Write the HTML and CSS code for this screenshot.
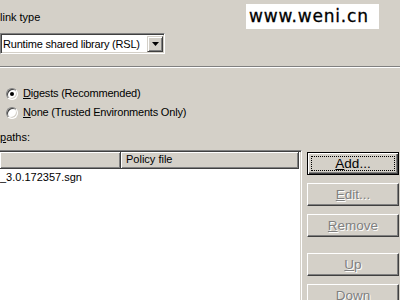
FILE: index.html
```html
<!DOCTYPE html>
<html lang="en">
<head>
  <meta charset="UTF-8">
  <title>Library path settings</title>
  <link rel="stylesheet" href="styles.css">
</head>
<body>
  <div class="dialog">
    <div class="field-label">link type</div>
    <div class="combo">
      <span class="combo-value">Runtime shared library (RSL)</span>
      <span class="combo-btn">
        <svg width="7" height="4" viewBox="0 0 7 4"><path d="M0 0h7L3.5 4z" fill="#000"/></svg>
      </span>
    </div>

    <div class="separator"></div>

    <div class="radio-group">
      <label class="radio checked"><span class="radio-dot"></span><span><u>D</u>igests (Recommended)</span></label>
      <label class="radio"><span class="radio-dot"></span><span><u>N</u>one (Trusted Environments Only)</span></label>
    </div>

    <div class="field-label paths-label"><u>p</u>aths:</div>

    <div class="paths-row">
      <div class="list">
        <div class="list-header">
          <div class="col col-path"></div>
          <div class="col col-policy">Policy file</div>
        </div>
        <div class="list-row">_3.0.172357.sgn</div>
      </div>
      <div class="buttons">
        <button class="btn default"><span class="focus"><u>A</u>dd...</span></button>
        <button class="btn" disabled><u>E</u>dit...</button>
        <button class="btn" disabled><u>R</u>emove</button>
        <button class="btn spaced" disabled><u>U</u>p</button>
        <button class="btn" disabled>Down</button>
      </div>
    </div>

    <div class="watermark">www.weni.cn</div>
  </div>
</body>
</html>
```

FILE: styles.css
```css
html, body {
  margin: 0;
  height: 100%;
  overflow: hidden;
}
body {
  background: #d4d0c8;
  font-family: 'Liberation Sans', Arial, sans-serif;
  font-size: 11px;
  color: #000;
}
.dialog {
  position: relative;
  height: 300px;
}
.field-label {
  line-height: 13px;
  padding-top: 11px;
}

/* combo box */
.combo {
  display: flex;
  align-items: center;
  width: 162px;
  height: 17px;
  margin-top: 9px;
  padding: 1px 1px 1px 0;
  background: #fff;
  border-top: 1px solid #808080;
  border-left: 1px solid #808080;
  border-bottom: 1px solid #fff;
  border-right: 1px solid #fff;
  box-shadow: inset 1px 1px #404040, inset -1px -1px #d4d0c8;
}
.combo-value {
  flex: 1;
  padding-left: 2px;
  white-space: nowrap;
  letter-spacing: -0.2px;
}
.combo-btn {
  width: 16px;
  height: 16px;
  display: flex;
  align-items: center;
  justify-content: center;
  box-sizing: border-box;
  background: #d4d0c8;
  border: 1px solid;
  border-color: #d4d0c8 #404040 #404040 #d4d0c8;
  box-shadow: inset 1px 1px #fff, inset -1px -1px #808080;
}

.separator {
  margin-top: 12px;
  border-top: 1px solid #808080;
  border-bottom: 1px solid #fff;
}

/* radios */
.radio-group {
  padding: 19px 0 0 6px;
  display: flex;
  flex-direction: column;
  gap: 6px;
}
.radio {
  display: flex;
  align-items: center;
  gap: 5px;
  line-height: 13px;
  letter-spacing: -0.2px;
}
.radio-dot {
  width: 12px;
  height: 12px;
  box-sizing: border-box;
  border-radius: 50%;
  background: #fff;
  border: 1px solid;
  border-color: #808080 #fff #fff #808080;
  box-shadow: inset 1px 1px #404040, inset -1px -1px #d4d0c8;
  display: flex;
  align-items: center;
  justify-content: center;
}
.radio.checked .radio-dot::after {
  content: '';
  width: 4px;
  height: 4px;
  border-radius: 50%;
  background: #000;
}
.paths-label {
  padding-top: 12px;
}

/* list + buttons */
.paths-row {
  display: flex;
  gap: 5px;
  margin-top: 6px;
}
.list {
  width: 302px;
  height: 160px;
  box-sizing: border-box;
  background: #fff;
  border-top: 1px solid #808080;
  border-right: 1px solid #fff;
  box-shadow: inset 0 1px #404040, inset -1px 0 #d4d0c8;
  padding-top: 1px;
  padding-right: 2px;
}
.list-header {
  display: flex;
  height: 17px;
}
.col {
  box-sizing: border-box;
  background: #d4d0c8;
  border-right: 1px solid #404040;
  border-bottom: 1px solid #404040;
  box-shadow: inset 1px 1px #fff, inset -1px -1px #808080;
  line-height: 15px;
  padding-left: 5px;
}
.col-path { width: 121px; }
.col-policy { flex: 1; }
.list-row {
  line-height: 13px;
  padding-top: 2px;
}
.buttons {
  display: flex;
  flex-direction: column;
  gap: 8px;
  padding-top: 2px;
}
.btn {
  width: 92px;
  height: 23px;
  padding: 0;
  font-family: inherit;
  font-size: 13.5px;
  color: #000;
  background: #d4d0c8;
  border: 1px solid;
  border-color: #fff #404040 #404040 #fff;
  box-shadow: inset -1px -1px #808080;
}
.btn:disabled {
  color: #808080;
  text-shadow: 1px 1px #fff;
}
.btn.default {
  border-color: #000;
  box-shadow: inset 1px 1px #fff, inset -1px -1px #404040, inset -2px -2px #808080;
  display: flex;
  padding: 3px;
}
.btn .focus {
  flex: 1;
  display: flex;
  align-items: center;
  justify-content: center;
  border: 1px dotted #000;
}
.btn.spaced { margin-top: 8px; }

.watermark {
  position: absolute;
  top: 4px;
  left: 246px;
  width: 133px;
  height: 25px;
  background: #fff;
  font-family: 'DejaVu Sans', sans-serif;
  font-size: 17px;
  letter-spacing: 0.8px;
  line-height: 25px;
  padding-left: 3px;
  box-sizing: border-box;
  -webkit-text-stroke: 0.3px #000;
}
```
